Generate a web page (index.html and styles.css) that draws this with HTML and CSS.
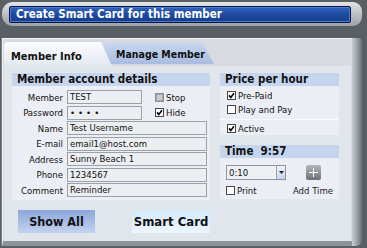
FILE: index.html
```html
<!DOCTYPE html>
<html lang="en">
<head>
    <meta charset="UTF-8">
    <title>Create Smart Card</title>
    <link rel="stylesheet" href="styles.css">
</head>
<body>
    <div class="topbar">
        <div class="title">Create Smart Card for this member</div>
    </div>

    <div class="panel">
        <div class="panel-body">
            <div class="tabs">
                <div class="tab active">Member Info</div>
                <div class="tab">Manage Member</div>
            </div>
            <div class="content">
                <div class="col-left">
                    <div class="group">
                        <div class="group-head">Member account details</div>
                        <div class="group-body form">
                            <label>Member</label>
                            <div class="field">TEST</div>
                            <div class="opt side"><span class="cb disabled"></span>Stop</div>

                            <label>Password</label>
                            <div class="field dots">••••</div>
                            <div class="opt side"><span class="cb"><svg viewBox="0 0 7 7"><path d="M1 3.4 L2.8 5.4 L6 1.2" /></svg></span>Hide</div>

                            <label>Name</label>
                            <div class="field long">Test Username</div>

                            <label>E-mail</label>
                            <div class="field long">email1@host.com</div>

                            <label>Address</label>
                            <div class="field long">Sunny Beach 1</div>

                            <label>Phone</label>
                            <div class="field long">1234567</div>

                            <label>Comment</label>
                            <div class="field long">Reminder</div>
                        </div>
                    </div>
                    <div class="buttons">
                        <div class="btn blue">Show All</div>
                        <div class="btn light">Smart Card</div>
                    </div>
                </div>

                <div class="col-right">
                    <div class="group">
                        <div class="group-head">Price per hour</div>
                        <div class="group-body price">
                            <div class="opt"><span class="cb"><svg viewBox="0 0 7 7"><path d="M1 3.4 L2.8 5.4 L6 1.2" /></svg></span>Pre-Paid</div>
                            <div class="opt"><span class="cb"></span>Play and Pay</div>
                            <div class="sep"></div>
                            <div class="opt"><span class="cb"><svg viewBox="0 0 7 7"><path d="M1 3.4 L2.8 5.4 L6 1.2" /></svg></span>Active</div>
                        </div>
                    </div>
                    <div class="group time">
                        <div class="group-head">Time&nbsp; 9:57</div>
                        <div class="group-body time-body">
                            <div class="select">
                                <span class="value">0:10</span>
                                <span class="arrow"><svg viewBox="0 0 5 3"><path d="M0 0 H5 L2.5 3 Z" /></svg></span>
                            </div>
                            <div class="plus"><svg viewBox="0 0 15 15"><path d="M7.5 3 V12 M3 7.5 H12" /></svg></div>
                            <div class="opt"><span class="cb"></span>Print</div>
                            <div class="add-time">Add Time</div>
                        </div>
                    </div>
                </div>
            </div>
        </div>
        <div class="panel-edge"></div>
    </div>
</body>
</html>
```

FILE: styles.css
```css
* {
    box-sizing: border-box;
}
body {
    margin: 0;
    width: 367px;
    height: 248px;
    overflow: hidden;
    background-color: #5a5f63;
    font-family: "DejaVu Sans Condensed", "Liberation Sans", sans-serif;
    font-size: 9.5px;
    color: #111;
}
.topbar {
    margin: 2px 5px 0 2px;
    height: 24px;
    padding: 4px 11px 3px 7px;
    border-radius: 11px 9px 9px 11px;
    background: linear-gradient(#e2e5e8, #b6babe 60%, #9da2a7);
}
.title {
    height: 17px;
    border: 1px solid #0c1645;
    border-radius: 2px;
    background: linear-gradient(#3064c0, #1f4ca3 45%, #163d8c);
    box-shadow: inset 0 0 0 1px #4b79cf;
    color: white;
    font-weight: bold;
    font-size: 11.5px;
    line-height: 15px;
    padding-left: 6px;
}
.panel {
    display: flex;
    margin: 12px 5px 0 2px;
    height: 208px;
}
.panel-body {
    flex: 1;
    display: flex;
    flex-direction: column;
    background-color: #d7dbe1;
    border-top: 1px solid #f2f4f7;
    border-left: 1px solid #eef1f4;
    border-bottom: 5px solid #8e9398;
    box-shadow: -1px 0 0 #7c8186;
    padding: 3px 1px 0 1px;
}
.panel-edge {
    width: 10px;
    border-radius: 0 3px 6px 0;
    background: linear-gradient(to right, #c8cccf, #9da2a6 50%, #6a6f74);
}
.tabs {
    display: flex;
    height: 24px;
}
.tab {
    width: 110px;
    height: 21px;
    margin-top: 1px;
    margin-left: -8px;
    padding: 5px 0 0 12px;
    font-weight: bold;
    font-size: 10.5px;
    white-space: nowrap;
    background: linear-gradient(#c7d6ef, #a9bde1);
    border-radius: 4px 0 0 0;
    clip-path: polygon(0 0, calc(100% - 11px) 0, 100% 100%, 0 100%);
}
.tab.active {
    position: relative;
    z-index: 1;
    width: 108px;
    height: 24px;
    margin: 0;
    padding: 8px 0 0 7px;
    font-size: 11px;
    background: linear-gradient(#fbfcfe, #e3e8f0);
}
.content {
    flex: 1;
    display: flex;
    gap: 10px;
    padding: 7px 0 0 8px;
    background-color: #e1e5ec;
}
.col-left {
    width: 198px;
    display: flex;
    flex-direction: column;
}
.col-right {
    width: 119px;
    display: flex;
    flex-direction: column;
    gap: 10px;
}
.group-head {
    height: 13px;
    padding-left: 5px;
    background-color: #c6d5ee;
    font-weight: bold;
    font-size: 11.5px;
    line-height: 13px;
}
.group-body {
    background-color: #ebeef4;
}
.form {
    display: grid;
    grid-template-columns: 51px 75px 61px;
    column-gap: 4px;
    row-gap: 1.5px;
    align-items: center;
    padding: 4px 0 3px 0;
}
.form label {
    text-align: right;
}
.field {
    height: 14px;
    padding-left: 2px;
    border: 1px solid #9ba1a9;
    background-color: #eceef2;
    line-height: 12px;
    white-space: nowrap;
}
.field.long {
    grid-column: span 2;
}
.field.dots {
    letter-spacing: 3px;
}
.opt {
    display: flex;
    align-items: center;
    gap: 2px;
    height: 14px;
}
.opt.side {
    padding-left: 9px;
}
.cb {
    width: 9px;
    height: 9px;
    border: 1px solid #44484d;
    background-color: white;
    display: flex;
}
.cb svg {
    width: 7px;
    height: 7px;
}
.cb path {
    fill: none;
    stroke: #000;
    stroke-width: 1.6;
}
.cb.disabled {
    border-color: #8a8e93;
    background-color: #c9ccd0;
    box-shadow: inset 0 0 0 1px #a4a8ac;
}
.buttons {
    display: flex;
    gap: 37px;
    padding: 10px 0 0 6px;
}
.btn {
    width: 82px;
    height: 23px;
    display: flex;
    align-items: center;
    justify-content: center;
    font-weight: bold;
    font-size: 12.5px;
}
.btn.blue {
    background: linear-gradient(#8ca6da, #c4d3ef);
}
.btn.light {
    width: 83px;
    font-size: 13px;
    background: linear-gradient(#d4e9fb, #ecf6ff);
}
.price {
    padding: 2px 0 0 7px;
    height: 49px;
}
.sep {
    margin: 3px 0 1px -7px;
    border-top: 1px solid #f8fafc;
}
.time-body {
    display: grid;
    grid-template-columns: 60px 50px;
    column-gap: 2px;
    row-gap: 3px;
    align-items: center;
    padding: 7px 0 2px 6px;
}
.select {
    width: 60px;
    height: 15px;
    display: flex;
    border: 1px solid #8d939b;
    background-color: #eef0f4;
}
.select .value {
    flex: 1;
    padding-left: 2px;
    line-height: 13px;
}
.select .arrow {
    width: 9px;
    display: flex;
    align-items: center;
    justify-content: center;
    border-left: 1px solid #9aa3b0;
    background: linear-gradient(#eef3fa, #c8d5ea);
}
.select .arrow svg {
    width: 5px;
    height: 3px;
}
.select .arrow path {
    fill: #1c2330;
}
.plus {
    justify-self: center;
    width: 15px;
    height: 15px;
    border-radius: 2px;
    background: linear-gradient(#b3b6b9, #6d7175);
}
.plus svg {
    display: block;
    width: 15px;
    height: 15px;
}
.plus path {
    stroke: white;
    stroke-width: 1;
    fill: none;
}
.add-time {
    justify-self: center;
    color: #222;
}
```
